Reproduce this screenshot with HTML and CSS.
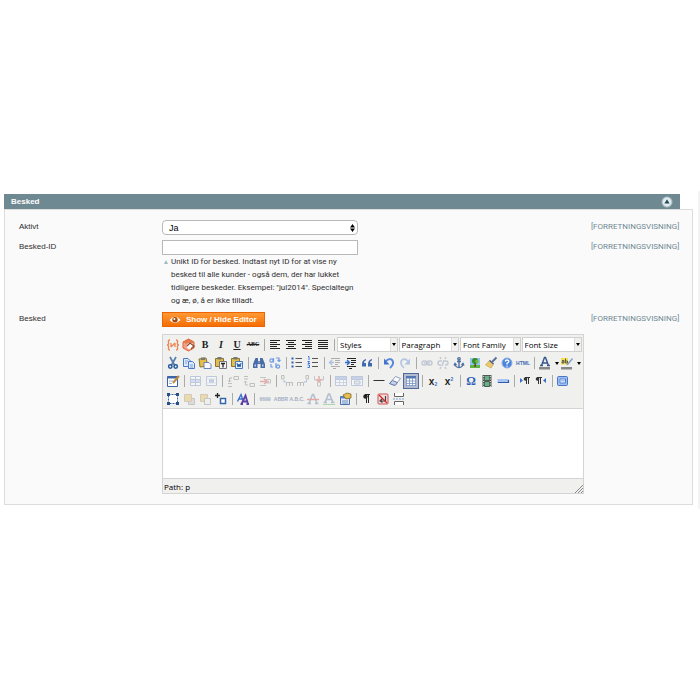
FILE: index.html
```html
<!DOCTYPE html>
<html lang="da">
<head>
    <meta charset="UTF-8">
    <meta name="viewport" content="width=device-width, initial-scale=1.0">
    <title>Besked</title>
    <link rel="stylesheet" href="styles.css">
</head>
<body>
    <main class="page">
        <div class="section-head">
            <h1>Besked</h1>
            <button type="button" class="collapse" aria-label="Fold sammen">
                <svg viewBox="0 0 12 12"><circle cx="6" cy="6" r="5.5" fill="#a9bdc4"/><circle cx="6" cy="6" r="4.4" fill="#e4eef0"/><path d="M6 3.2L8.6 7.6H3.4z" fill="#24495a"/></svg>
            </button>
        </div>
        <form class="panel">
            <div class="row">
                <label class="name" for="active">Aktivt</label>
                <div class="value">
                    <select id="active" class="field field-select"><option>Ja</option><option>Nej</option></select>
                </div>
                <span class="scope">[FORRETNINGSVISNING]</span>
            </div>
            <div class="row">
                <label class="name" for="message-id">Besked-ID</label>
                <div class="value">
                    <input type="text" id="message-id" class="field">
                    <p class="note">Unikt ID for besked. Indtast nyt ID for at vise ny besked til alle kunder - også dem, der har lukket tidligere beskeder. Eksempel: "jul2014". Specialtegn og æ, ø, å er ikke tilladt.</p>
                </div>
                <span class="scope">[FORRETNINGSVISNING]</span>
            </div>
            <div class="row">
                <label class="name" for="message">Besked</label>
                <div class="value">
                    <button type="button" class="toggle">
                        <svg viewBox="0 0 12 10"><path d="M0.5 5Q6 -1.5 11.5 5Q6 11 0.5 5z" fill="#fff"/><circle cx="6" cy="4.8" r="2.7" fill="#a8480a"/><circle cx="5.4" cy="4" r="1" fill="#fff"/></svg>
                        Show / Hide Editor
                    </button>
                    <div class="editor">
                        <div class="toolbar">
                            <!-- text style -->
                            <div class="tools tools-first">
                                <button type="button" aria-label="Variable"><svg viewBox="0 0 14 14" fill="none" stroke="#ee8452" stroke-width="1.3"><path d="M4 2Q2 2 2.5 4.5Q3 7 1 7Q3 7 2.5 9.5Q2 12 4 12M10 2Q12 2 11.500 4.500Q11 7 13 7Q11 7 11.500 9.500Q12 12 10 12M5 9L9 5M5 5V9M9 5V9"/></svg></button>
                                <button type="button" aria-label="Widget"><svg viewBox="0 0 14 14"><path d="M6.500 1L12 4V10L6.500 13L1 10V4z" fill="#f2a184"/><path d="M6.500 1L12 4L6.500 7L1 4z" fill="#e87a50"/><path d="M6.500 1L12 4V10L6.500 13L1 10V4z" fill="none" stroke="#e4673c"/><circle cx="8" cy="8" r="3.200" fill="#fff"/><path d="M5 8L8 5L12 8L9 11" fill="none" stroke="#8d4a35" stroke-width="1.300"/></svg></button>
                                <button type="button" class="glyph" aria-label="Bold"><b>B</b></button>
                                <button type="button" class="glyph" aria-label="Italic"><i>I</i></button>
                                <button type="button" class="glyph" aria-label="Underline"><u>U</u></button>
                                <button type="button" class="glyph tiny" aria-label="Strikethrough"><s>ABC</s></button>
                                <span class="sep"></span>
                                <button type="button" aria-label="Align left"><svg viewBox="0 0 14 14" stroke="#222" stroke-width="1"><path d="M2 2.500H12M2 4.500H9M2 6.500H12M2 8.500H9M2 10.500H12"/></svg></button>
                                <button type="button" aria-label="Align center"><svg viewBox="0 0 14 14" stroke="#222" stroke-width="1"><path d="M2 2.500H12M4 4.500H10M2 6.500H12M4 8.500H10M2 10.500H12"/></svg></button>
                                <button type="button" aria-label="Align right"><svg viewBox="0 0 14 14" stroke="#222" stroke-width="1"><path d="M2 2.500H12M5 4.500H12M2 6.500H12M5 8.500H12M2 10.500H12"/></svg></button>
                                <button type="button" aria-label="Justify"><svg viewBox="0 0 14 14" stroke="#222" stroke-width="1"><path d="M2 2.500H12M2 4.500H12M2 6.500H12M2 8.500H12M2 10.500H12"/></svg></button>
                                <span class="sep"></span>
                                <div class="combos">
                                    <select class="combo" aria-label="Styles"><option>Styles</option></select>
                                    <select class="combo" aria-label="Paragraph"><option>Paragraph</option></select>
                                    <select class="combo" aria-label="Font Family"><option>Font Family</option></select>
                                    <select class="combo" aria-label="Font Size"><option>Font Size</option></select>
                                </div>
                            </div>
                            <!-- clipboard, lists, links -->
                            <div class="tools">
                                <button type="button" aria-label="Cut"><svg viewBox="0 0 14 14" fill="none"><path d="M4 1L8.500 9M10 1L5.500 9" stroke="#5b7fae" stroke-width="1.700"/><circle cx="4.300" cy="10.500" r="1.700" stroke="#24579c" stroke-width="1.500"/><circle cx="9.700" cy="10.500" r="1.700" stroke="#24579c" stroke-width="1.500"/></svg></button>
                                <button type="button" aria-label="Copy"><svg viewBox="0 0 14 14" stroke="#4b79c4" fill="#dce9fb"><path d="M1.500 2.500H6L8.500 5V10.500H1.500z"/><path d="M6.500 5.500H10.500L12.500 7.500V12.500H6.500z"/><path d="M3 5H6M3 7H5M8 9H11M8 11H11" stroke="#7ba1dc"/></svg></button>
                                <button type="button" aria-label="Paste"><svg viewBox="0 0 14 14"><path d="M1 3L8 2L10 10L2 11z" fill="#e3bd4c" stroke="#8a7430"/><path d="M3 1.500H7V4H3z" fill="#777"/><path d="M6 6.500H11L13 8.500V12.500H6z" fill="#f8f8ff" stroke="#6b83b8"/></svg></button>
                                <button type="button" aria-label="Paste as text"><svg viewBox="0 0 14 14"><path d="M1.500 2.500H9.500V10.500H1.500z" fill="#e3bd4c" stroke="#8a7430"/><path d="M3.500 1H7.500V3.500H3.500z" fill="#777"/><path d="M5.500 5.500H12.500V12.500H5.500z" fill="#f4f4f4" stroke="#777"/><path d="M7 7.500H11M9 7V11.500" stroke="#222" stroke-width="1.300"/></svg></button>
                                <button type="button" aria-label="Paste from Word"><svg viewBox="0 0 14 14"><path d="M1.500 2.500H9.500V10.500H1.500z" fill="#e3bd4c" stroke="#8a7430"/><path d="M3.500 1H7.500V3.500H3.500z" fill="#777"/><path d="M5.500 5.500H12.500V12.500H5.500z" fill="#e5f0ff" stroke="#4776b9"/><path d="M7 7L8 11L9 8L10 11L11 7" fill="none" stroke="#2458a6"/></svg></button>
                                <span class="sep"></span>
                                <button type="button" aria-label="Find"><svg viewBox="0 0 14 14" fill="#4a6ca6"><path d="M3.500 2H6V5H8V2H10.500L13 8V12H8.500V8H5.500V12H1V8z"/><path d="M2.500 8.500H4V10.500H2.500zM10 8.500H11.500V10.500H10zM6.500 5.500H7.500V7H6.500z" fill="#bdd0f0"/></svg></button>
                                <button type="button" aria-label="Find and replace"><svg viewBox="0 0 14 14" fill="none" stroke="#6f9be6" stroke-width="1.200"><circle cx="3.500" cy="4.500" r="1.600"/><path d="M5.500 2V6.500M8 2H11V5M9.500 4L11 5.500L12.500 4M3 8V11H5M8 7V12"/><circle cx="10" cy="10.500" r="1.600"/></svg></button>
                                <span class="sep"></span>
                                <button type="button" aria-label="Bullet list"><svg viewBox="0 0 14 14"><path d="M5.500 2.500H12M5.500 6.500H12M5.500 10.500H12" stroke="#555"/><path d="M1.500 1.500H3.500V3.500H1.500zM1.500 5.500H3.500V7.500H1.500zM1.500 9.500H3.500V11.500H1.500z" fill="#2b5fc0"/></svg></button>
                                <button type="button" aria-label="Numbered list"><svg viewBox="0 0 14 14" fill="none"><path d="M6 2.500H12M6 6.500H12M6 10.500H12" stroke="#555"/><path d="M2 .5H3V4M1.500 5.500H3.500L2 7.500H4M1.500 9H3.500V11.500H1.500" stroke="#3c78dc"/></svg></button>
                                <span class="sep"></span>
                                <button type="button" class="off" aria-label="Outdent"><svg viewBox="0 0 14 14"><path d="M3 2.500H12M7 4.500H12M7 6.500H12M7 8.500H10M3 10.500H12M5 12.500H8" stroke="#333"/><path d="M6 6.500H2M4 4L1.500 6.500L4 9" stroke="#336bc8" fill="none" stroke-width="1.400"/></svg></button>
                                <button type="button" aria-label="Indent"><svg viewBox="0 0 14 14"><path d="M3 2.500H12M7 4.500H12M7 6.500H12M7 8.500H10M3 10.500H12M5 12.500H8" stroke="#222" stroke-width="1.200"/><path d="M1 6.500H5M3 4L5.500 6.500L3 9" stroke="#336bc8" fill="none" stroke-width="1.400"/></svg></button>
                                <button type="button" aria-label="Blockquote"><svg viewBox="0 0 14 14" fill="#3f68ae"><path d="M6 3Q2 4 2 8V10.500H6V7H4Q4 5 6 4.300zM12 3Q8 4 8 8V10.500H12V7H10Q10 5 12 4.300z"/></svg></button>
                                <span class="sep"></span>
                                <button type="button" aria-label="Undo"><svg viewBox="0 0 14 14"><path d="M4 5Q8 1.500 10.500 4.500Q12.500 8 8 12" fill="none" stroke="#5a88da" stroke-width="2"/><path d="M2 2.500V8.500H7.500z" fill="#4274cf"/></svg></button>
                                <button type="button" class="off" aria-label="Redo"><svg viewBox="0 0 14 14"><path d="M10 5Q6 1.500 3.500 4.500Q1.500 8 6 12" fill="none" stroke="#4274cf" stroke-width="1.600"/><path d="M12 2.500V8.500H6.500z" fill="#4274cf"/></svg></button>
                                <span class="sep"></span>
                                <button type="button" class="off" aria-label="Link"><svg viewBox="0 0 14 14" fill="none" stroke="#6c7fa4" stroke-width="1.400"><rect x="2" y="5" width="5" height="4" rx="2"/><rect x="7" y="5" width="5" height="4" rx="2"/><path d="M4 7H10"/></svg></button>
                                <button type="button" class="off" aria-label="Unlink"><svg viewBox="0 0 14 14" fill="none" stroke="#6c7fa4" stroke-width="1.400"><path d="M6 5H4Q2 5 2 7Q2 9 4 9H5M8 5H10Q12 5 12 7Q12 9 10 9H9M5 3L4 1M9 3L10 1M5 11L4 13M9 11L10 13M8 4L6 10"/></svg></button>
                                <button type="button" aria-label="Anchor"><svg viewBox="0 0 14 14" fill="none" stroke="#4d6fa3" stroke-width="1.400"><circle cx="7" cy="2.800" r="1.200"/><path d="M7 4V12M5 5.500H9M3 8Q3.500 11.500 7 11.500Q10.500 11.500 11 8M2 9.500L3 7.500L4.500 9M12 9.500L11 7.500L9.500 9"/></svg></button>
                                <button type="button" aria-label="Image"><svg viewBox="0 0 14 14"><path d="M2 2H12V12H2z" fill="#8fc4ee"/><path d="M2 9H12V12H2z" fill="#5fb444"/><path d="M6.300 7H8V11H6.300z" fill="#6c4a20"/><circle cx="7" cy="5" r="3" fill="#3a8a25"/><circle cx="9" cy="5.500" r="1.800" fill="#74b942"/></svg></button>
                                <button type="button" aria-label="Clean up"><svg viewBox="0 0 14 14"><path d="M12.500 1.500L8 6" stroke="#596f9c" stroke-width="2"/><path d="M6 4L9.500 8L7 12L1.500 9z" fill="#edc968" stroke="#c9a95e" stroke-width=".8"/><path d="M5.500 4.500L9.500 8" stroke="#4d679a" stroke-width="1.500"/></svg></button>
                                <button type="button" aria-label="Help"><svg viewBox="0 0 14 14"><circle cx="7" cy="7" r="5" fill="#4b84d8" stroke="#8cb2ea"/><path d="M5.200 5.500Q5.500 4 7 4Q9 4 8.800 5.600Q8.500 6.600 7 7.200V8.500M7 9.500V10.700" fill="none" stroke="#fff" stroke-width="1.300"/></svg></button>
                                <button type="button" class="glyph html" aria-label="HTML">HTML</button>
                                <span class="sep"></span>
                                <button type="button" class="split" aria-label="Text color"><svg viewBox="0 0 14 14"><path d="M3.500 9.500L6.500 1.500H7.500L10.500 9.500M4.700 7H9.300M2 9.500H5M9 9.500H12" fill="none" stroke="#34578d" stroke-width="1.400"/><path d="M1 11H12V13.500H1z" fill="#888"/></svg><svg class="arrow" viewBox="0 0 4 3"><path d="M0 0H4L2 3z"/></svg></button>
                                <button type="button" class="split" aria-label="Background color"><svg viewBox="0 0 14 14"><path d="M1 2H8V8.500H1z" fill="#f0df52"/><path d="M2 4.500H4V7H2V5.800H4M5.500 2.500V7H7.500V5H5.500" fill="none" stroke="#554" stroke-width=".9"/><path d="M12 2L7 8L6.500 9.500L8.300 8.800L13 3z" fill="#829cc4"/><path d="M1 11H12V13.500H1z" fill="#888"/></svg><svg class="arrow" viewBox="0 0 4 3"><path d="M0 0H4L2 3z"/></svg></button>
                            </div>
                            <!-- tables, special characters -->
                            <div class="tools">
                                <button type="button" aria-label="Edit style"><svg viewBox="0 0 14 14"><path d="M1.500 2.500H11.500V12.500H1.500z" fill="#fff" stroke="#3d65a6"/><path d="M1.500 2.500H11.500V4.500H1.500z" fill="#3d65a6"/><path d="M3 7H7M3 9.500H6" stroke="#9bb2d8"/><path d="M13 2L7 9" stroke="#c18a3a" stroke-width="2"/></svg></button>
                                <span class="sep"></span>
                                <button type="button" class="off" aria-label="Row properties"><svg viewBox="0 0 14 14" fill="#fff" stroke="#5f7fbf"><path d="M2.500 2.500H12.500V11.500H2.500z"/><path d="M2.500 5.500H12.500V8.500H2.500z" fill="#abc2ee"/><path d="M7.500 2.500V11.500"/></svg></button>
                                <button type="button" class="off" aria-label="Cell properties"><svg viewBox="0 0 14 14" fill="#fff" stroke="#5f7fbf"><path d="M2.500 2.500H12.500V11.500H2.500z"/><path d="M5.500 5.500H9.500V8.500H5.500z" fill="#6f92d8"/><path d="M2.500 5H12M2.500 9H12" stroke="#b5c6e6"/></svg></button>
                                <span class="sep"></span>
                                <button type="button" class="off" aria-label="Insert row before"><svg viewBox="0 0 14 14" fill="none" stroke="#666"><path d="M8 2.500H12.500V5.500H8zM2 12.500H6M2 9.500H6"/><path d="M6 4H3.500V8M2 6.500L3.500 8L5 6.500" stroke="#555"/></svg></button>
                                <button type="button" class="off" aria-label="Insert row after"><svg viewBox="0 0 14 14" fill="none" stroke="#666"><path d="M8 9.500H12.500V12.500H8zM2 2.500H6M2 5H6"/><path d="M6 11H3.500V7M2 8.500L3.500 7L5 8.500"/></svg></button>
                                <button type="button" class="off" aria-label="Delete row"><svg viewBox="0 0 14 14" fill="none"><path d="M2 3.500H8M2 11.500H8M8 5.500H12.500V9H8" stroke="#777"/><path d="M2 7.500H11M6 5L9 7.500L6 10" stroke="#c33" stroke-width="1.500"/></svg></button>
                                <span class="sep"></span>
                                <button type="button" class="off" aria-label="Insert column before"><svg viewBox="0 0 14 14" fill="none" stroke="#666"><path d="M1.500 1.500H4V5H1.500zM6.500 12V8.500H9.500V12M9.500 8.500H12.500V12"/><path d="M4 6V8H6" stroke="#36c"/></svg></button>
                                <button type="button" class="off" aria-label="Insert column after"><svg viewBox="0 0 14 14" fill="none" stroke="#666"><path d="M10 1.500H12.500V5H10zM1.500 12V8.500H4.500V12M4.500 8.500H7.500V12"/><path d="M10.500 6V8H8" stroke="#36c"/></svg></button>
                                <button type="button" class="off" aria-label="Delete column"><svg viewBox="0 0 14 14" fill="none"><path d="M2.500 2V6H5M11.500 2V6H9M5.500 8V12H8.500V8" stroke="#777"/><path d="M7 2V8M4.500 5L7 8L9.500 5" stroke="#c33" stroke-width="1.500"/></svg></button>
                                <span class="sep"></span>
                                <button type="button" class="off" aria-label="Split cells"><svg viewBox="0 0 14 14" fill="#fff" stroke="#5f7fbf"><path d="M1.500 2.500H12.500V11.500H1.500z"/><path d="M1.500 2.500H12.500V5.500H1.500z" fill="#7c9ce0"/><path d="M1.500 8.500H12.500M5.500 5.500V11.500M9.500 5.500V11.500" stroke="#8ca6da"/></svg></button>
                                <button type="button" class="off" aria-label="Merge cells"><svg viewBox="0 0 14 14" fill="#fff" stroke="#5f7fbf"><path d="M1.500 2.500H12.500V11.500H1.500z"/><path d="M1.500 2.500H12.500V5.500H1.500z" fill="#7c9ce0"/><path d="M4.500 7H10V10H4.500z" fill="#cfdcf5"/></svg></button>
                                <span class="sep"></span>
                                <button type="button" aria-label="Horizontal rule"><svg viewBox="0 0 14 14"><path d="M1.500 6.500H12.500" stroke="#333"/></svg></button>
                                <button type="button" aria-label="Remove formatting"><svg viewBox="0 0 14 14"><path d="M7.500 2.500L12.500 4.500L7 11.500L1.500 9.500z" fill="#fff" stroke="#8a9abd"/><path d="M4.500 6.500L9.500 8.500L7 11.500L1.500 9.500z" fill="#c3d1ee" stroke="#687ba0"/></svg></button>
                                <button type="button" class="active" aria-label="Show guidelines"><svg viewBox="0 0 14 14"><path d="M2 2H12V12H2z" fill="#fff"/><path d="M2 2H12V4.500H2z" fill="#5477b4"/><path d="M2 7H12M2 9.500H12M2.500 4V12M5.500 4V12M8.500 4V12M11.500 4V12M2 11.500H12" stroke="#7893c2" stroke-width=".8"/></svg></button>
                                <span class="sep"></span>
                                <button type="button" class="glyph script" aria-label="Subscript">x<sub>2</sub></button>
                                <button type="button" class="glyph script" aria-label="Superscript">x<sup>2</sup></button>
                                <span class="sep"></span>
                                <button type="button" class="glyph omega" aria-label="Special character">Ω</button>
                                <button type="button" aria-label="Media"><svg viewBox="0 0 14 14"><path d="M2.500 1H11.500V13H2.500z" fill="#4e5a53"/><path d="M5 2H9V6H5zM5 8H9V12H5z" fill="#65b287"/><path d="M3.700 2V13M10.300 2V13" stroke="#eee" stroke-dasharray="1 1.500"/></svg></button>
                                <button type="button" aria-label="Page rule"><svg viewBox="0 0 14 14"><path d="M1.500 5H12.500V9H1.500z" fill="#a9c4f2"/><path d="M2 8.500H12.500V6" fill="none" stroke="#2c5ba9" stroke-width="1.200"/></svg></button>
                                <span class="sep"></span>
                                <button type="button" aria-label="Left to right"><svg viewBox="0 0 14 14"><path d="M2 4L5 6.500L2 9z" fill="#3a70cc"/><path d="M8.500 3.500V10M10.500 3.500V10M7 3.500H12" stroke="#333"/><circle cx="7.500" cy="5" r="1.800" fill="#333"/></svg></button>
                                <button type="button" aria-label="Right to left"><svg viewBox="0 0 14 14"><path d="M12 4L9 6.500L12 9z" fill="#3a70cc"/><path d="M4.500 3.500V10M6.500 3.500V10M3 3.500H8" stroke="#333"/><circle cx="3.500" cy="5" r="1.800" fill="#333"/></svg></button>
                                <span class="sep"></span>
                                <button type="button" aria-label="Fullscreen"><svg viewBox="0 0 14 14"><rect x="1.500" y="2.500" width="10" height="9" rx="1" fill="#9dbdf3" stroke="#4a76c2"/><path d="M4 5H9.500V9H4z" fill="#fff" stroke="#5383d4"/><path d="M5 6.500H9M5 8H9" stroke="#8caee8" stroke-width=".8"/></svg></button>
                            </div>
                            <!-- layers and inline markup -->
                            <div class="tools">
                                <button type="button" aria-label="Insert layer"><svg viewBox="0 0 14 14"><path d="M2.500 2.500H11.500V11.500H2.500z" fill="#fff" stroke="#3467b0" stroke-dasharray="2 1"/><path d="M1 1H4V4H1zM10 1H13V4H10zM1 10H4V13H1zM10 10H13V13H10z" fill="#294f86"/></svg></button>
                                <button type="button" class="off" aria-label="Move forward"><svg viewBox="0 0 14 14"><path d="M6.500 6.500H12.500V12.500H6.500z" fill="#bbb" stroke="#777"/><path d="M2.500 2.500H9.500V9.500H2.500z" fill="#e4b230" stroke="#9a8660"/></svg></button>
                                <button type="button" class="off" aria-label="Move backward"><svg viewBox="0 0 14 14"><path d="M2.500 2.500H9.500V9.500H2.500z" fill="#e4b230" stroke="#9a8660"/><path d="M6.500 6.500H12.500V12.500H6.500z" fill="#eee" stroke="#777"/></svg></button>
                                <button type="button" aria-label="Absolute position"><svg viewBox="0 0 14 14" fill="none"><path d="M3.500 1V6M1 3.500H6" stroke="#222" stroke-width="1.300"/><path d="M6.500 6.500H11.500V11.500H6.500z" fill="#fff" stroke="#3467b0" stroke-width="1.500"/></svg></button>
                                <span class="sep"></span>
                                <button type="button" aria-label="Styles"><svg viewBox="0 0 14 14" fill="none"><path d="M1.500 9.500L5 2.500L7 8.500M2.800 7H6.500" stroke="#3970cf" stroke-width="1.400"/><path d="M5.500 12L9.500 3.500L12 12M7 9.500H11.500M4.500 12H7M10.500 12H13" stroke="#5c41a5" stroke-width="1.800"/></svg></button>
                                <span class="sep"></span>
                                <button type="button" class="glyph faint" aria-label="Citation">6699</button>
                                <button type="button" class="glyph faint" aria-label="Abbreviation">ABBR</button>
                                <button type="button" class="glyph faint" aria-label="Acronym">A.B.C.</button>
                                <button type="button" class="off" aria-label="Deletion"><svg viewBox="0 0 14 14" fill="none"><path d="M3 11.500L6.500 2.500H7.500L11 11.500M1.500 11.500H5M9 11.500H12.500" stroke="#48679b" stroke-width="1.600"/><path d="M1 7.500H13" stroke="#c22" stroke-width="1.400"/></svg></button>
                                <button type="button" class="off" aria-label="Insertion"><svg viewBox="0 0 14 14" fill="none"><path d="M3 10.500L6.500 2H7.500L11 10.500M4.500 7.500H10M1.500 10.500H5M9 10.500H12.500" stroke="#48679b" stroke-width="1.600"/><path d="M1 12.500H13" stroke="#3a3"/></svg></button>
                                <button type="button" aria-label="Attributes"><svg viewBox="0 0 14 14"><path d="M2.500 4.500H11.500V12.500H2.500z" fill="#e2ebfa" stroke="#4b6fab"/><path d="M2.500 4.500H11.500V6.500H2.500z" fill="#5f87c8"/><path d="M4 9H10M4 11H10" stroke="#718dbd"/><path d="M5 3L9 1L13 2V6L8 7z" fill="#e9bd4d" stroke="#80692e" stroke-width=".8"/></svg></button>
                                <span class="sep"></span>
                                <button type="button" aria-label="Visual characters"><svg viewBox="0 0 14 14"><path d="M6.500 2.500V11M8.500 2.500V11M5 2.500H10" stroke="#222"/><circle cx="5.500" cy="4.500" r="2.200" fill="#222"/></svg></button>
                                <button type="button" aria-label="Nonbreaking space"><svg viewBox="0 0 14 14"><rect x="2" y="2" width="10" height="10" rx="1" fill="#f1dcdc" stroke="#cf5252"/><path d="M9.500 4V9H4.500M6.500 6.500L4 9L6.500 10.500" fill="none" stroke="#444" stroke-width="1.200"/><path d="M3 3L11 11" stroke="#d12b2b" stroke-width="1.200"/></svg></button>
                                <button type="button" aria-label="Page break"><svg viewBox="0 0 14 14" fill="#fff" stroke="#666"><path d="M2.500 1V4.500H11.500V1M2.500 13V9.500H11.500V13"/><path d="M1 7H13" stroke="#7fa3cf" stroke-dasharray="2 1"/></svg></button>
                            </div>
                        </div>
                        <textarea id="message" class="content"></textarea>
                        <div class="status">
                            <span>Path: p</span>
                            <svg viewBox="0 0 8 8" stroke="#888" stroke-width="1"><path d="M0 8L8 0M3 8L8 3M6 8L8 6"/></svg>
                        </div>
                    </div>
                </div>
                <span class="scope">[FORRETNINGSVISNING]</span>
            </div>
        </form>
    </main>
</body>
</html>
```
FILE: styles.css
```css
* {
    box-sizing: border-box;
}

body {
    margin: 0;
    background: #fff;
    color: #2f2f2f;
    font-family: "Liberation Sans", Arial, sans-serif;
    font-size: 8px;
    line-height: 13px;
}

button, select, input, textarea {
    margin: 0;
    padding: 0;
    border: 0;
    border-radius: 0;
    color: inherit;
    font: inherit;
}

svg {
    display: block;
}

.page {
    margin-top: 191px;
    padding: 3px 5px 4px 4px;
    border-right: 2px solid #f4f4f4;
}

.section-head {
    display: flex;
    align-items: center;
    justify-content: space-between;
    height: 15px;
    margin-right: 13px;
    padding: 0 7px;
    background: #6f8992;
    color: #fff;
}

.section-head h1 {
    margin: 0;
    font-size: 8px;
}

.collapse {
    background: none;
}

.collapse svg {
    width: 12px;
    height: 12px;
}

.panel {
    padding: 10px 11px 10px 14px;
    border: 1px solid #dcdcdc;
    background: #fafafa;
}

.row {
    display: grid;
    grid-template-columns: 136px 1fr 90px;
    column-gap: 7px;
    margin-bottom: 5px;
}

.row:last-child {
    margin-bottom: 0;
}

.name, .scope {
    line-height: 14px;
}

.scope {
    color: #6f8992;
    font-family: Roboto, sans-serif;
    white-space: nowrap;
}

.field {
    display: block;
    width: 196px;
    height: 15px;
    padding: 0 6px;
    border: 1px solid #b9b9b9;
    background: #fff;
}

.field-select {
    appearance: none;
    border-radius: 4px;
    background: #fff url("data:image/svg+xml,%3Csvg xmlns='http://www.w3.org/2000/svg' viewBox='0 0 5 8'%3E%3Cpath d='M0 3.500L2.500 0L5 3.500zM0 4.500L2.500 8L5 4.500z'/%3E%3C/svg%3E") no-repeat right 2px center / 5px 8px;
    color: #000;
    font-size: 9px;
    line-height: 12px;
}

.note {
    position: relative;
    width: 196px;
    margin: 0;
    padding-left: 9px;
    font-family: Roboto, sans-serif;
}

.note::before {
    content: "";
    position: absolute;
    top: 5px;
    left: 2px;
    border: 2px solid transparent;
    border-top: 0;
    border-bottom: 4px solid #a3b8bf;
}

.toggle {
    display: flex;
    align-items: center;
    gap: 5px;
    height: 15px;
    padding: 0 7px 0 6px;
    border: 1px solid #ed6502;
    background: linear-gradient(#ff9a35, #f56d05);
    color: #fff;
    font-weight: bold;
}

.toggle svg {
    width: 12px;
    height: 10px;
}

.editor {
    margin-top: 7px;
    border: 1px solid #d4d4d4;
    background: #f0f0ee;
    font-family: "Open Sans", sans-serif;
}

.tools {
    display: flex;
    align-items: center;
    height: 18px;
    padding: 0 2px;
}

.tools-first {
    height: 19px;
    padding-right: 1px;
}

.tools button {
    display: flex;
    align-items: center;
    justify-content: center;
    flex: none;
    width: 16px;
    height: 16px;
    background: none;
}

.tools svg {
    flex: none;
    width: 14px;
    height: 14px;
}

.tools .off {
    opacity: .35;
}

.tools .active {
    border: 1px solid #53699c;
    background: #b2bbd0;
}

.tools .split {
    justify-content: flex-start;
    gap: 3px;
    width: 22px;
    padding-left: 1px;
}

.tools .arrow {
    width: 4px;
    height: 3px;
}

.tools .glyph {
    color: #222;
    font-family: "Liberation Serif", serif;
    font-size: 10px;
    font-weight: bold;
}

.tools .tiny {
    font-size: 6px;
}

.tools .html {
    color: #3e6cb2;
    font-family: "Liberation Sans", sans-serif;
    font-size: 5px;
}

.tools .faint {
    color: #a3aec4;
    font-family: "Liberation Sans", sans-serif;
    font-size: 5px;
    white-space: nowrap;
}

.tools .script {
    font-family: "Liberation Sans", sans-serif;
    font-size: 10px;
}

.script sub, .script sup {
    color: #3a70cc;
    font-size: 5px;
    line-height: 6px;
}

.script sub {
    align-self: flex-end;
    margin-bottom: 2px;
}

.script sup {
    align-self: flex-start;
    margin-top: 3px;
}

.tools .omega {
    color: #2f62b8;
    font-size: 12px;
}

.sep {
    flex: none;
    width: 2px;
    height: 12px;
    margin: 0 1px 0 3px;
    border-left: 1px solid #aaa;
}

.combos {
    display: flex;
    flex: 1;
    gap: 1px;
}

.combo {
    appearance: none;
    flex: 1;
    min-width: 0;
    height: 15px;
    padding: 0 9px 0 2px;
    border: 1px solid #d0d0d0;
    background:
        url("data:image/svg+xml,%3Csvg xmlns='http://www.w3.org/2000/svg' viewBox='0 0 4 3'%3E%3Cpath d='M0 0H4L2 3z'/%3E%3C/svg%3E") no-repeat right 1px center / 4px 3px,
        linear-gradient(#ddd, #ddd) no-repeat right 6px top / 1px 100%,
        linear-gradient(#f0f0ee, #f0f0ee) no-repeat right top / 6px 100%,
        #fff;
    color: #000;
    line-height: 12px;
}

.content {
    display: block;
    width: 100%;
    height: 70px;
    border-top: 1px solid #d4d4d4;
    background: #fff;
    resize: none;
}

.status {
    display: flex;
    align-items: flex-end;
    justify-content: space-between;
    height: 15px;
    padding-left: 1px;
    border-top: 1px solid #d4d4d4;
    color: #000;
}

.status svg {
    width: 8px;
    height: 8px;
}
```
